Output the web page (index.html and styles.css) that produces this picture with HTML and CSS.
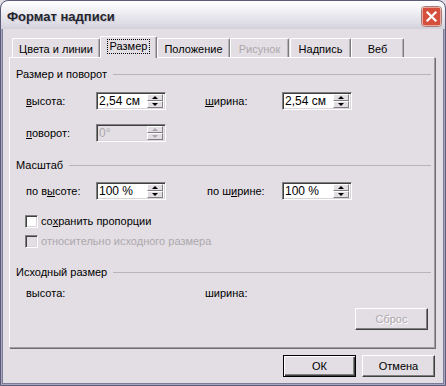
FILE: index.html
```html
<html><head>
<meta charset="UTF-8">
<meta name="viewport" content="width=device-width, initial-scale=1.0">
<title>Формат надписи</title>
<link rel="stylesheet" href="styles.css">
</head>
<body>
<div class="dialog">
    <div class="titlebar">
        <span class="title">Формат надписи</span>
        <svg class="close" width="21" height="21" viewBox="0 0 21 21">
            <rect x="0.5" y="0.5" width="20" height="20" rx="3" fill="#ffffff" stroke="#a87a74"/>
            <rect x="1.5" y="1.5" width="18" height="18" rx="2" fill="#d4503c"/>
            <path d="M6.5 6.5 L14.5 14.5 M14.5 6.5 L6.5 14.5" stroke="#ffffff" stroke-width="2.2" stroke-linecap="square"/>
        </svg>
    </div>

    <div class="client">
        <div class="tabs">
            <div class="tab t1">Цвета и линии</div>
            <div class="tab t2 active"><span class="focus">Размер</span></div>
            <div class="tab t3">Положение</div>
            <div class="tab t4 disabled">Рисунок</div>
            <div class="tab t5">Надпись</div>
            <div class="tab t6">Веб</div>
        </div>

        <div class="panel">
            <!-- Размер и поворот -->
            <div class="group g1"><span>Размер и поворот</span></div>
            <div class="row r1">
                <span class="lbl"><u>в</u>ысота:</span>
                <div class="spin"><span class="val">2,54 см</span><span class="arrows"><b class="up"></b><b class="down"></b></span></div>
                <span class="lbl2"><u>ш</u>ирина:</span>
                <div class="spin"><span class="val">2,54 см</span><span class="arrows"><b class="up"></b><b class="down"></b></span></div>
            </div>
            <div class="row r2">
                <span class="lbl"><u>п</u>оворот:</span>
                <div class="spin off"><span class="val">0°</span><span class="arrows"><b class="up"></b><b class="down"></b></span></div>
            </div>

            <!-- Масштаб -->
            <div class="group g2"><span>Масштаб</span></div>
            <div class="row r3">
                <span class="lbl">по в<u>ы</u>соте:</span>
                <div class="spin"><span class="val">100 %</span><span class="arrows"><b class="up"></b><b class="down"></b></span></div>
                <span class="lbl2 w2">по ш<u>и</u>рине:</span>
                <div class="spin"><span class="val">100 %</span><span class="arrows"><b class="up"></b><b class="down"></b></span></div>
            </div>
            <div class="check c1"><span class="box"></span><span>со<u>х</u>ранить пропорции</span></div>
            <div class="check c2 off"><span class="box"></span><span>относительно исходного размера</span></div>

            <!-- Исходный размер -->
            <div class="group g3"><span>Исходный размер</span></div>
            <div class="row r4">
                <span class="lbl wide">высота:</span>
                <span>ширина:</span>
            </div>
            <div class="reset-row">
                <button class="btn off">Сброс</button>
            </div>
        </div>

        <div class="buttons">
            <button class="btn default">ОК</button>
            <button class="btn">Отмена</button>
        </div>
    </div>
</div>
</body></html>
```

FILE: styles.css
```css
body {
    margin: 0;
    font-family: "Liberation Sans", Arial, sans-serif;
    font-size: 11px;
    color: #000;
    background: #e3dee4;
}

.dialog {
    width: 446px;
    height: 386px;
    box-sizing: border-box;
    border: 1px solid #5c5c7a;
    border-radius: 8px 8px 0 0;
    background: #e3dee4;
    box-shadow: inset 1px 0 0 #a6a6bc, inset -1px 0 0 #a6a6bc, inset 0 -1px 0 #a6a6bc,
                inset 2px 0 0 #7d7d99, inset -2px 0 0 #7d7d99, inset 0 -2px 0 #7d7d99;
    overflow: hidden;
}

.titlebar {
    height: 28px;
    display: flex;
    align-items: center;
    justify-content: space-between;
    padding: 0 3px 0 6px;
    background: linear-gradient(to bottom, #ffffff, #f1f0f4 35%, #dedce4 80%, #d2d0d9);
    border-radius: 7px 7px 0 0;
}

.title {
    font-size: 13px;
    font-weight: bold;
    color: #24242e;
    text-shadow: 1px 1px 0 #c8c6d0;
    margin-top: 2px;
}

.close {
    margin-top: 3px;
}

.client {
    padding: 0 10px 0 8px;
}

/* tabs */
.tabs {
    display: flex;
    align-items: flex-end;
    height: 21px;
    margin-top: 7px;
    padding-left: 3px;
    position: relative;
    z-index: 1;
}

.tab {
    height: 19px;
    box-sizing: border-box;
    border-top: 1px solid #fff;
    border-left: 1px solid #fff;
    border-right: 1px solid #7a7a7a;
    border-radius: 2px 2px 0 0;
    box-shadow: inset -1px 0 0 #b4b0b6;
    display: flex;
    justify-content: center;
    align-items: center;
    padding-top: 1px;
}

.t1 { width: 88px; }
.t3 { width: 73px; }
.t4 { width: 59px; }
.t5 { width: 61px; margin-left: 1px; }
.t6 { width: 53px; }

.tab.active {
    width: 57px;
    height: 22px;
    margin-bottom: -1px;
    background: #e3dee4;
    padding-top: 0;
    padding-bottom: 2px;
}

.focus {
    border: 1px dotted #000;
    padding: 0 2px 1px 2px;
}

.tab.disabled {
    color: #aca8ac;
}

/* panel */
.panel {
    height: 291px;
    box-sizing: border-box;
    border-top: 1px solid #fff;
    border-left: 1px solid #fff;
    border-right: 1px solid #a09ca2;
    border-bottom: 1px solid #a09ca2;
    box-shadow: 1px 1px 0 #6e6e6e;
    padding: 0 3px 0 6px;
    display: flex;
    flex-direction: column;
}

.group {
    display: flex;
    align-items: center;
    height: 14px;
}

.group::after {
    content: "";
    flex: 1;
    height: 1px;
    background: #b8b4bc;
    margin-left: 6px;
}

.g1 { margin-top: 9px; }
.g2 { margin-top: 16px; }
.g3 { margin-top: 17px; }

.row {
    display: flex;
    align-items: center;
    padding-left: 10px;
    height: 18px;
}

.r1 { margin-top: 11px; }
.r2 { margin-top: 14px; }
.r3 { margin-top: 10px; }
.r4 { margin-top: 7px; height: 14px; }

.lbl { width: 70px; }
.lbl.wide { width: 179px; }
.lbl2 { width: 77px; margin-left: 39px; }
.lbl2.w2 { width: 75px; margin-left: 41px; }

/* spin edit */
.spin {
    width: 70px;
    height: 18px;
    box-sizing: border-box;
    border: 1px solid;
    border-color: #808080 #fff #fff #808080;
    box-shadow: inset 1px 1px 0 #404040, inset -1px -1px 0 #d8d4da;
    background: #fff;
    display: flex;
    align-items: center;
    justify-content: space-between;
    padding: 1px 2px 1px 2px;
}

.val {
    font-size: 12px;
}

.arrows {
    width: 16px;
    height: 14px;
    display: flex;
    flex-direction: column;
}

.arrows b {
    flex: 1;
    box-sizing: border-box;
    background: #e3dee4;
    border: 1px solid;
    border-color: #fff #808080 #808080 #fff;
    display: flex;
    justify-content: center;
    align-items: center;
}

.arrows b::before {
    content: "";
    border-left: 3px solid transparent;
    border-right: 3px solid transparent;
}

.up::before { border-bottom: 3px solid #000; }
.down::before { border-top: 3px solid #000; }

.spin.off {
    background: #e3dee4;
    color: #aca8ac;
}

.spin.off .up::before { border-bottom-color: #aca8ac; }
.spin.off .down::before { border-top-color: #aca8ac; }

/* checkboxes */
.check {
    display: flex;
    align-items: center;
    gap: 3px;
    padding-left: 9px;
    height: 14px;
}

.c1 { margin-top: 14px; }
.c2 { margin-top: 6px; }

.box {
    width: 13px;
    height: 13px;
    box-sizing: border-box;
    border: 1px solid;
    border-color: #808080 #fff #fff #808080;
    box-shadow: inset 1px 1px 0 #404040, inset -1px -1px 0 #d8d4da;
    background: #fff;
}

.check.off { color: #aca8ac; }
.check.off .box { background: #e3dee4; }

/* buttons */
.reset-row {
    display: flex;
    justify-content: flex-end;
    margin-top: 8px;
    padding-right: 3px;
}

.btn {
    width: 73px;
    height: 22px;
    box-sizing: border-box;
    font-family: "Liberation Sans", Arial, sans-serif;
    font-size: 11px;
    color: #000;
    background: #e3dee4;
    border: 1px solid;
    border-color: #fff #404040 #404040 #fff;
    box-shadow: inset -1px -1px 0 #808080;
    padding: 0;
}

.btn.off {
    color: #aca8ac;
    text-shadow: 1px 1px 0 #fff;
}

.btn.default {
    border: 1px solid #000;
    box-shadow: inset 1px 1px 0 #fff, inset -1px -1px 0 #404040, inset -2px -2px 0 #808080;
}

.buttons {
    display: flex;
    justify-content: flex-end;
    gap: 6px;
    margin-top: 7px;
}
```
